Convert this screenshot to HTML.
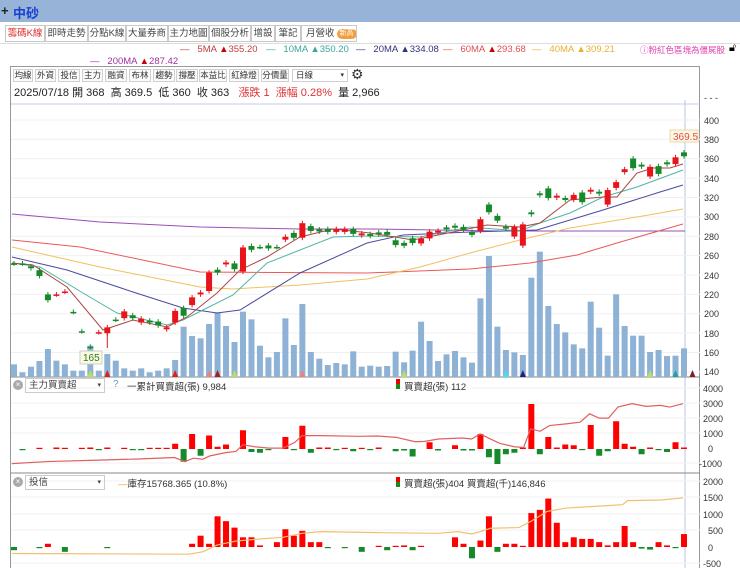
<!DOCTYPE html>
<html><head><meta charset="utf-8">
<style>
*{margin:0;padding:0;box-sizing:border-box}
body{width:740px;height:568px;overflow:hidden;background:#fff;font-family:"Liberation Sans","Noto Sans CJK TC",sans-serif;position:relative;color:#333}
.abs{position:absolute;white-space:nowrap}
#title{left:0;top:0;width:740px;height:22px;background:#97b4d8}
.tab{position:absolute;top:25px;height:17px;border:1px solid #c8c8c8;background:#fff;font-size:9.5px;line-height:15px;text-align:center;color:#444;white-space:nowrap;overflow:hidden}
.lg{position:absolute;font-size:9.5px;top:44px;white-space:nowrap}
.btn{position:absolute;top:69px;height:13px;border:1px solid #d0d0d0;font-size:8.5px;line-height:11px;text-align:center;color:#333;background:#fafafa;white-space:nowrap;overflow:hidden}
</style></head><body>
<div id="title" class="abs"></div>
<div class="abs" style="left:1px;top:3px;font-size:13px;font-weight:bold;color:#222">+</div>
<div class="abs" style="left:13px;top:3px;font-size:13px;font-weight:bold;color:#1a3fd0">中砂</div>
<div class="abs" style="left:0;top:22px;width:740px;height:3px;background:#fff"></div>
<div class="tab" style="left:5px;width:40px;color:#e03030">籌碼K線</div>
<div class="tab" style="left:45px;width:43px">即時走勢</div>
<div class="tab" style="left:88px;width:38px">分點K線</div>
<div class="tab" style="left:126px;width:42px">大量券商</div>
<div class="tab" style="left:168px;width:41px">主力地圖</div>
<div class="tab" style="left:209px;width:42px">個股分析</div>
<div class="tab" style="left:251px;width:24px">增設</div>
<div class="tab" style="left:275px;width:26px">筆記</div>
<div class="tab" style="left:301px;width:56px;text-align:left;padding-left:4px">月營收<span style="display:inline-block;margin-left:2px;background:#f0a040;color:#fff;border-radius:6px;font-size:7px;line-height:10px;padding:0 3px;vertical-align:1px">新高</span></div>
<div class="abs" style="left:0;top:43px;width:740px;height:1px;background:#ddd"></div>

<div class="lg" style="left:180px;color:#c04040">—&nbsp;&nbsp;&nbsp;5MA <span style="color:#c00">▲</span>355.20</div>
<div class="lg" style="left:266px;color:#3aa79a">—&nbsp;&nbsp;&nbsp;10MA <span>▲</span>350.20</div>
<div class="lg" style="left:356px;color:#33337a">—&nbsp;&nbsp;&nbsp;20MA ▲334.08</div>
<div class="lg" style="left:443px;color:#e05050">—&nbsp;&nbsp;&nbsp;60MA <span style="color:#c00">▲</span>293.68</div>
<div class="lg" style="left:532px;color:#e8b030">—&nbsp;&nbsp;&nbsp;40MA ▲309.21</div>
<div class="lg" style="left:640px;color:#e040b0;font-size:8.5px">ⓘ粉紅色區塊為僵屍股</div>
<div class="lg" style="left:729px;top:42px;font-size:11px;color:#000">🔓︎</div>
<div class="lg" style="left:90px;top:56px;color:#a030a0">—&nbsp;&nbsp;&nbsp;200MA <span style="color:#c00">▲</span>287.42</div>

<div class="abs" style="left:10px;top:66px;width:690px;height:502px;border:1px solid #999;border-bottom:none"></div>
<div class="btn" style="left:13px;width:20px">均線</div>
<div class="btn" style="left:35px;width:21px">外資</div>
<div class="btn" style="left:58px;width:22px">投信</div>
<div class="btn" style="left:82px;width:21px">主力</div>
<div class="btn" style="left:105px;width:22px">融資</div>
<div class="btn" style="left:129px;width:22px">布林</div>
<div class="btn" style="left:153px;width:22px">趨勢</div>
<div class="btn" style="left:176px;width:22px">撐壓</div>
<div class="btn" style="left:199px;width:28px">本益比</div>
<div class="btn" style="left:229px;width:30px">紅綠燈</div>
<div class="btn" style="left:261px;width:28px">分價量</div>
<div class="btn" style="left:292px;width:56px;text-align:left;padding-left:3px;background:#fff">日線<span style="float:right;margin-right:3px;font-size:7px">▾</span></div>
<div class="abs" style="left:351px;top:66px;font-size:14px;color:#333">⚙</div>
<div class="abs" style="left:14px;top:84px;font-size:11px;color:#222">2025/07/18 開 368&nbsp; 高 369.5&nbsp; 低 360&nbsp; 收 363&nbsp;&nbsp; <span style="color:#e03030">漲跌 1&nbsp; 漲幅 0.28%</span>&nbsp; 量 2,966</div>

<svg id="s" class="abs" style="left:0;top:0" width="740" height="568" xmlns="http://www.w3.org/2000/svg">
<line x1="11" y1="104" x2="700" y2="104" stroke="#c8c8e8"/>
<line x1="685" y1="100" x2="685" y2="568" stroke="#b8c4e8"/>
<line x1="10" y1="377" x2="700" y2="377" stroke="#888"/>
<line x1="10" y1="473" x2="700" y2="473" stroke="#888"/>
<g id="grid"></g><g id="vol"></g><g id="ma"></g><g id="cd"></g><g id="p2"></g><g id="p3"></g>
<g font-size="9" fill="#333" font-family="Liberation Sans,sans-serif">
<text x="704" y="101">- - -</text>
<text x="704" y="124">400</text><text x="704" y="143">380</text><text x="704" y="162">360</text><text x="704" y="182">340</text><text x="704" y="201">320</text><text x="704" y="220">300</text><text x="704" y="240">280</text><text x="704" y="259">260</text><text x="704" y="279">240</text><text x="704" y="298">220</text><text x="704" y="317">200</text><text x="704" y="337">180</text><text x="704" y="356">160</text><text x="704" y="375">140</text>
<text x="703" y="392">4000</text><text x="703" y="407">3000</text><text x="703" y="422">2000</text><text x="703" y="437">1000</text><text x="708" y="452">0</text><text x="699" y="467">-1000</text>
<text x="703" y="485">2000</text><text x="703" y="501">1500</text><text x="703" y="518">1000</text><text x="708" y="534">500</text><text x="708" y="551">0</text><text x="703" y="567">-500</text>
</g>
<rect x="670" y="130" width="28" height="12" fill="#fdf6e0" stroke="#e8d8b0"/>
<text x="673" y="140" font-size="10" fill="#e05050" font-family="Liberation Sans,sans-serif">369.5</text>
<rect x="80" y="351" width="22" height="13" fill="#fafae0" stroke="#ccc"/>
<text x="83" y="361" font-size="10" fill="#2a7a2a" font-family="Liberation Sans,sans-serif">165</text>
</svg>

<div class="abs" style="left:13px;top:380px;width:10px;height:10px;border-radius:5px;background:#aaa;color:#fff;font-size:8px;line-height:10px;text-align:center">×</div>
<div class="abs" style="left:25px;top:378px;width:80px;height:15px;border:1px solid #ccc;font-size:9.5px;line-height:13px;padding-left:3px;color:#444">主力買賣超<span style="float:right;margin-right:3px;font-size:7px">▾</span></div>
<div class="abs" style="left:113px;top:379px;font-size:10px;color:#6699cc">?</div>
<div class="abs" style="left:127px;top:379px;font-size:9.5px;color:#333">一累計買賣超(張) 9,984</div>
<div class="abs" style="left:396px;top:379px;width:4px;height:5px;background:#e00"></div>
<div class="abs" style="left:396px;top:384px;width:4px;height:5px;background:#1a8a1a"></div>
<div class="abs" style="left:404px;top:379px;font-size:9.5px;color:#333">買賣超(張) 112</div>

<div class="abs" style="left:13px;top:477px;width:10px;height:10px;border-radius:5px;background:#aaa;color:#fff;font-size:8px;line-height:10px;text-align:center">×</div>
<div class="abs" style="left:25px;top:475px;width:80px;height:15px;border:1px solid #ccc;font-size:9.5px;line-height:13px;padding-left:3px;color:#444">投信<span style="float:right;margin-right:3px;font-size:7px">▾</span></div>
<div class="abs" style="left:118px;top:476px;font-size:9.5px;color:#333"><span style="color:#e8a030">—</span>庫存15768.365 (10.8%)</div>
<div class="abs" style="left:396px;top:477px;width:4px;height:5px;background:#e00"></div>
<div class="abs" style="left:396px;top:482px;width:4px;height:5px;background:#1a8a1a"></div>
<div class="abs" style="left:404px;top:476px;font-size:9.5px;color:#333">買賣超(張)404 買賣超(千)146,846</div>

<script>
var NS="http://www.w3.org/2000/svg";
function el(g,t,a){var e=document.createElementNS(NS,t);for(var k in a)e.setAttribute(k,a[k]);document.getElementById(g).appendChild(e);return e;}
function X(i){return 14+i*670/79;}
function Y(p){return 120+(400-p)*0.969;}
for(var p=140;p<=400;p+=20){el('grid','line',{x1:11,x2:700,y1:Y(p),y2:Y(p),stroke:'#f0f0f0'});}
[388,403,418,433,463].forEach(function(y){el('grid','line',{x1:11,x2:700,y1:y,y2:y,stroke:'#f0f0f0'});});
[481,497,514,530,563].forEach(function(y){el('grid','line',{x1:11,x2:700,y1:y,y2:y,stroke:'#f0f0f0'});});
var vt=[793,817,800,783,747,782,793,812,812,737,812,762,782,805,812,805,817,812,805,780,680,708,715,672,637,678,726,635,658,737,772,756,655,735,612,756,776,795,789,793,754,800,797,800,798,755,787,752,665,723,783,763,753,772,788,595,468,680,750,757,765,533,455,618,672,697,733,745,605,683,767,583,678,707,707,756,750,768,767,745];
vt.forEach(function(t,i){var y=100+t/3;el('vol','rect',{x:X(i)-3,y:y,width:6,height:377-y,fill:'#8eb2d6'});});
var mid=[252,252,248,242,217,220,223,202,182,166,181,183,194,199,197,193,192,190,185,197,202,213,221,233,244,252,249,256,268,269,269,269,278,281,286,288,286,286,286,286,285,282,281.3,283,283,273.4,271.7,275.5,275.1,281.3,284.7,288.2,289.9,288.2,283,291.6,308.8,298.6,288.9,284.7,281.3,303.7,323.3,324.4,320.9,318.5,320.2,320.2,327,325,320.2,332.9,347.7,355.3,352.9,346.7,348.4,355.3,358,364.6];
var bd="d0 d0 g2 g6 g6 r0 r0 g0 g0 g0 r0 r6 g0 r7 g3 r4 g2 g4 r2 r12 g8 r8 r2 r19 g3 r2 g6 r25 g4 g0 g3 g0 r3 g5 r15 g5 g2 g3 r3 r3 g5 r2 g2 g2 g3 g5 g3 g5 r5 r7 r2 g2 g2 g3 g3 r12 g8 g5 g2 r10 r22 g2 g2 g10 r2 g2 r5 g10 r2 g2 r15 r6 r3 g10 g2 r10 g8 g2 r7 g4".split(" ");
mid.forEach(function(m,i){var c=bd[i][0]=='r'?'#e8141c':'#168a2a';var h=+bd[i].slice(1);var x=X(i);
 el('cd','line',{x1:x,x2:x,y1:Y(m+h/2+2.5),y2:Y(m-h/2-2.5),stroke:c,'stroke-width':1});
 el('cd','rect',{x:x-3,y:Y(m+h/2),width:6,height:Math.max(1.5,h*0.969),fill:c});});
el('cd','line',{x1:X(11),x2:X(11),y1:330,y2:348,stroke:'#e8141c'});
function pl(g,pts,c,w){el(g,'polyline',{points:pts.map(function(p){return p.join(',')}).join(' '),fill:'none',stroke:c,'stroke-width':w||1});}
pl('ma',[[12,214],[100,222],[200,227],[300,229],[370,229],[500,231],[600,231],[685,231]],'#9a4fb8');
pl('ma',[[12,240],[80,247],[200,272],[367,273],[470,269],[530,263],[577,255],[617,243],[683,224]],'#e85a5a');
pl('ma',[[12,247],[100,267],[200,287],[233,289],[300,285],[367,279],[420,267],[470,253],[520,240],[570,228],[637,217],[683,209]],'#f0c060');
pl('ma',[[12,257],[67,270],[133,292],[183,308],[217,313],[240,310],[300,273],[367,243],[403,235],[470,232],[537,230],[603,210],[660,192],[683,185]],'#4a4aa0');
pl('ma',[[12,263],[40,267],[83,293],[117,313],[167,325],[183,320],[233,295],[267,263],[333,237],[370,236],[420,237],[470,227],[520,231],[540,223],[570,213],[603,197],[637,187],[683,170]],'#4fb5a5');
pl('ma',[[12,263],[33,265],[67,287],[103,330],[133,320],[167,327],[187,317],[217,293],[240,270],[267,257],[300,237],[333,229],[370,233],[413,240],[453,232],[487,225],[520,227],[540,223],[570,200],[603,197],[617,197],[637,173],[653,168],[670,168],[683,164]],'#b04545');
function bars(g,list,zero,scale){list.forEach(function(b){var i=Math.round((b[0]-30)/17.95);var v=b[1];var x=X(i);var c=v>=0?'#f00':'#168a2a';var hh=Math.abs(v)*scale;if(hh<1.2)hh=1.2;
 el(g,'rect',{x:x-3,y:v>=0?zero-hh:zero,width:6,height:hh,fill:c});});}
bars('p2',[[40,-50],[85,50],[120,100],[140,50],[175,50],[195,100],[213,-30],[230,100],[265,10],[285,-50],[300,-10],[320,10],[340,10],[355,10],[372,350],[392,-850],[408,1000],[428,-450],[445,900],[462,150],[480,300],[515,1250],[535,-200],[553,-250],[570,-10],[605,800],[625,-50],[642,1550],[660,-250],[677,100],[695,100],[715,-30],[730,10],[750,-150],[770,10],[785,-30],[802,100],[840,-150],[858,-100],[875,-500],[910,450],[930,-100],[965,250],[985,-100],[1000,-100],[1018,1000],[1038,-550],[1055,-1000],[1072,-350],[1090,-250],[1108,100],[1125,3000],[1145,-350],[1162,800],[1180,100],[1197,300],[1215,250],[1233,-50],[1250,1600],[1270,-450],[1287,-150],[1305,1850],[1325,350],[1342,150],[1360,-350],[1378,100],[1395,-50],[1413,-200],[1432,450],[1448,100]],449,0.015);
function zl(g,pts,c){pl(g,pts.map(function(p){return [p[0]/2.12,370+p[1]/2.97]}),c,1.2);}
zl('p2',[[25,278],[100,272],[200,268],[300,264],[370,260],[392,272],[410,262],[430,265],[445,255],[480,245],[500,242],[515,222],[540,228],[570,232],[600,232],[625,215],[640,195],[680,195],[760,197],[800,196],[840,200],[880,213],[900,212],[930,205],[980,202],[1000,205],[1018,190],[1040,205],[1060,218],[1090,228],[1110,230],[1125,175],[1145,182],[1165,165],[1200,160],[1230,155],[1250,130],[1270,143],[1290,143],[1310,110],[1340,100],[1370,108],[1400,105],[1420,110],[1448,100]],'#e06060');
bars('p3',[[30,-100],[85,-30],[103,100],[140,-150],[230,-30],[408,100],[426,350],[445,100],[462,950],[480,800],[498,600],[515,300],[535,300],[552,50],[588,150],[605,550],[625,350],[642,500],[660,150],[677,150],[695,-30],[730,-30],[768,-150],[802,10],[822,-100],[840,10],[858,50],[875,-100],[893,10],[965,300],[985,100],[1000,-350],[1018,200],[1038,950],[1055,-150],[1072,100],[1090,100],[1108,10],[1125,1050],[1145,1150],[1162,1500],[1180,750],[1197,150],[1215,300],[1233,250],[1250,250],[1270,150],[1287,50],[1305,150],[1325,650],[1342,150],[1360,-50],[1378,-80],[1395,150],[1413,50],[1432,-30],[1448,400]],547,0.0323);
zl('p3',[[25,545],[400,547],[430,540],[460,520],[500,508],[550,502],[600,497],[640,485],[680,480],[800,483],[930,485],[970,480],[1000,487],[1018,480],[1040,470],[1100,468],[1125,450],[1160,420],[1200,410],[1260,405],[1320,400],[1330,388],[1400,386],[1448,380]],'#f0c070');
[[9,'#b8e060'],[11,'#e02020'],[19,'#e02020'],[23,'#f08080'],[24,'#a02020'],[26,'#b8e060'],[34,'#f08080'],[46,'#b8e060'],[58,'#40e0f0'],[60,'#202080'],[75,'#b8e060'],[78,'#20a0a0'],[80,'#802020']].forEach(function(m){var x=X(m[0]);el('vol','polygon',{points:(x-3)+',377 '+(x+3)+',377 '+x+',370',fill:m[1]});});
</script>
</body></html>
